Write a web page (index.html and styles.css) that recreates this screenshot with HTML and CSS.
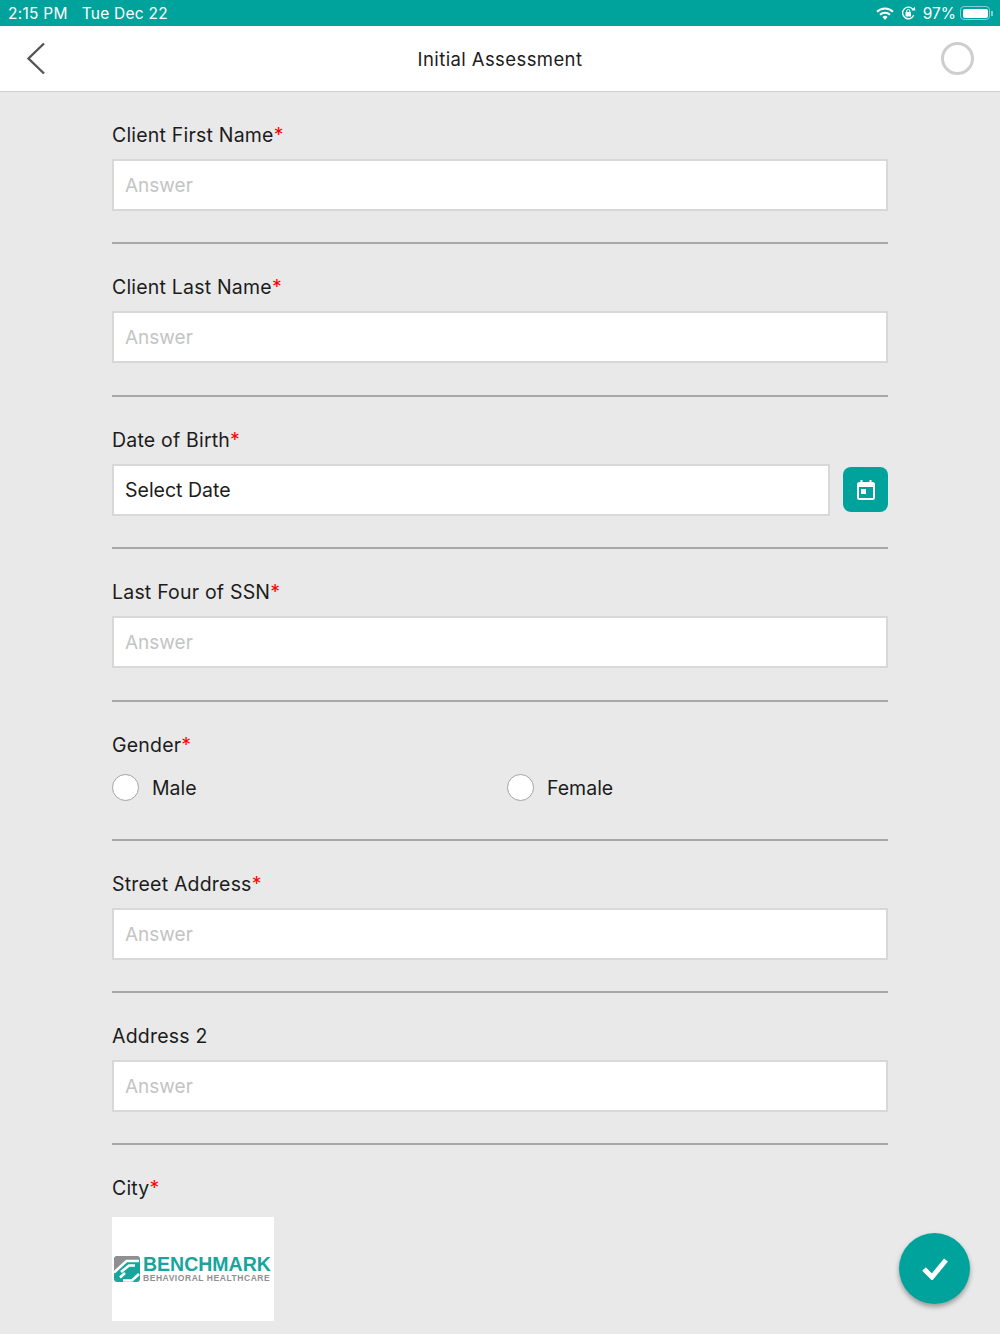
FILE: index.html
```html
<!DOCTYPE html>
<html>
<head>
  <title>Initial Assessment</title>
  <link rel="stylesheet" href="styles.css">
</head>
<body>
  <div class="status-bar">
    <div class="status-left">
      <span>2:15 PM</span>
      <span>Tue Dec 22</span>
    </div>
    <div class="status-right">
      <svg class="wifi" width="18" height="13" viewBox="0 0 18 13">
        <path d="M1 4.800 A11.500 11.500 0 0 1 17 4.800" fill="none" stroke="#fff" stroke-width="2"/>
        <path d="M4 7.800 A7.300 7.300 0 0 1 14 7.800" fill="none" stroke="#fff" stroke-width="2"/>
        <path d="M6.500 10 A3.500 3.500 0 0 1 11.500 10 L9 13 Z" fill="#fff"/>
      </svg>
      <svg class="lock" width="15" height="14" viewBox="0 0 15 14">
        <path d="M12.700 9.300 A5.800 5.800 0 1 1 12.300 3.800" fill="none" stroke="#fff" stroke-width="1.300"/>
        <path d="M10.600 4.400 L14.400 4.400 L13.600 0.800 Z" fill="#fff"/>
        <rect x="4.500" y="6" width="5.500" height="4.500" rx="0.600" fill="#fff"/>
        <path d="M5.700 6.500 V5 A1.500 1.500 0 0 1 8.800 5 V6.500" fill="none" stroke="#fff" stroke-width="1"/>
      </svg>
      <span class="battery-pct">97%</span>
      <div class="battery">
        <div class="battery-body"><div class="battery-fill"></div></div>
        <div class="battery-tip"></div>
      </div>
    </div>
  </div>

  <div class="header">
    <svg class="back" width="20" height="33" viewBox="0 0 20 33">
      <path d="M18 1.500 L2.500 16.500 L18 31.500" fill="none" stroke="#555" stroke-width="2.400"/>
    </svg>
    <div class="title">Initial Assessment</div>
    <div class="progress"></div>
  </div>

  <div class="form">
    <div class="field">
      <div class="label">Client First Name<span class="req">*</span></div>
      <div class="input placeholder">Answer</div>
    </div>
    <div class="field">
      <div class="label">Client Last Name<span class="req">*</span></div>
      <div class="input placeholder">Answer</div>
    </div>
    <div class="field">
      <div class="label">Date of Birth<span class="req">*</span></div>
      <div class="date-row">
        <div class="input">Select Date</div>
        <div class="date-btn">
          <svg width="18" height="20" viewBox="0 0 18 20">
            <path d="M4.500 0 V4 M13.500 0 V4" stroke="#fff" stroke-width="2"/>
            <rect x="1" y="3" width="16" height="16" rx="1.500" fill="none" stroke="#fff" stroke-width="2"/>
            <rect x="1" y="3" width="16" height="4" fill="#fff"/>
            <rect x="4" y="9" width="5" height="5" fill="#fff"/>
          </svg>
        </div>
      </div>
    </div>
    <div class="field">
      <div class="label">Last Four of SSN<span class="req">*</span></div>
      <div class="input placeholder">Answer</div>
    </div>
    <div class="field field-radio">
      <div class="label">Gender<span class="req">*</span></div>
      <div class="radio-row">
        <div class="radio-item"><span class="radio"></span>Male</div>
        <div class="radio-item"><span class="radio"></span>Female</div>
      </div>
    </div>
    <div class="field">
      <div class="label">Street Address<span class="req">*</span></div>
      <div class="input placeholder">Answer</div>
    </div>
    <div class="field">
      <div class="label">Address 2</div>
      <div class="input placeholder">Answer</div>
    </div>
    <div class="field field-last">
      <div class="label">City<span class="req">*</span></div>
      <div class="logo">
        <svg class="logo-icon" width="26" height="26" viewBox="0 0 26 26">
          <rect width="26" height="26" rx="3.500" fill="#17a59d"/>
          <path d="M3.500 0 H22.500 A3.500 3.500 0 0 1 26 3.500 V4 H13 L0 15 V3.500 A3.500 3.500 0 0 1 3.500 0 Z" fill="#8f8f91"/>
          <path d="M0 16.500 L12.500 5 H25 M7 16 L15 9.500 H21 M6 21.500 L11 17 M9 24.500 H18 L25 18" fill="none" stroke="#fff" stroke-width="2.600"/>
        </svg>
        <div class="logo-text">
          <div class="logo-name">BENCHMARK</div>
          <div class="logo-sub">BEHAVIORAL HEALTHCARE</div>
        </div>
      </div>
    </div>
  </div>

  <div class="fab">
    <svg width="26" height="23" viewBox="0 0 26 23">
      <path d="M2 12 L10 20 L24 3" fill="none" stroke="#fff" stroke-width="5"/>
    </svg>
  </div>
</body>
</html>
```

FILE: styles.css
```css
html, body {
  margin: 0;
  height: 100vh;
  overflow: hidden;
}

body {
  background-color: #e9e9e9;
  color: #1c1c1c;
  font-family: Inter, Roboto, sans-serif;
}

.status-bar {
  height: 26px;
  padding: 0 7px 0 8px;
  background-color: #00a39b;
  color: #fff;
  font-size: 15.500px;
  display: flex;
  justify-content: space-between;
  align-items: center;
}

.status-left {
  display: flex;
  gap: 14px;
  letter-spacing: 0.25px;
}

.status-right {
  display: flex;
  align-items: center;
}

.wifi {
  margin-right: 7px;
}

.lock {
  margin-right: 7px;
}

.battery-pct {
  margin-right: 4px;
}

.battery {
  display: flex;
  align-items: center;
}

.battery-body {
  box-sizing: border-box;
  width: 30px;
  height: 14px;
  padding: 1.500px;
  border: 1px solid #7fd1cd;
  border-radius: 4px;
}

.battery-fill {
  width: 100%;
  height: 100%;
  background-color: #fff;
  border-radius: 2px;
}

.battery-tip {
  width: 2px;
  height: 5px;
  margin-left: 1px;
  background-color: #7fd1cd;
}

.header {
  height: 65px;
  padding: 0 26px;
  background-color: #fff;
  border-bottom: 1px solid #cfcfcf;
  display: grid;
  grid-template-columns: 1fr auto 1fr;
  align-items: center;
}

.title {
  padding-top: 1px;
  font-size: 18.500px;
  letter-spacing: 0.4px;
}

.progress {
  box-sizing: border-box;
  width: 33px;
  height: 33px;
  justify-self: end;
  border: 3px solid #cecece;
  border-radius: 50%;
}

.form {
  width: 776px;
  margin: 0 auto;
}

.field {
  height: 152.400px;
  box-sizing: border-box;
  padding-top: 31px;
  border-bottom: 2px solid #a8a8a8;
}

.field-radio {
  height: 139px;
}

.field-last {
  border-bottom: none;
}

.label {
  height: 24px;
  margin-bottom: 12px;
  font-size: 19.500px;
  line-height: 24px;
  letter-spacing: 0.2px;
}

.req {
  color: #f00;
}

.input {
  box-sizing: border-box;
  height: 52px;
  padding: 0 11px;
  flex: 1;
  background-color: #fff;
  border: 2px solid #d8d8d8;
  font-size: 19.500px;
  line-height: 48px;
}

.placeholder {
  color: #c4c4c4;
  font-size: 19px;
  line-height: 50px;
}

.date-row {
  display: flex;
  align-items: center;
  gap: 13px;
}

.date-btn {
  width: 45px;
  height: 45px;
  background-color: #00a39b;
  border-radius: 8px;
  display: flex;
  justify-content: center;
  align-items: center;
}

.radio-row {
  display: grid;
  grid-template-columns: 395px 1fr;
  margin-top: 17px;
}

.radio-item {
  display: flex;
  align-items: center;
  gap: 13px;
  height: 28px;
  font-size: 19.500px;
}

.radio {
  box-sizing: border-box;
  width: 27px;
  height: 27px;
  background-color: #fff;
  border: 1.500px solid #a4a4a4;
  border-radius: 50%;
}

.logo {
  width: 162px;
  height: 104px;
  margin-top: 17px;
  background-color: #fff;
  display: flex;
  align-items: center;
  gap: 3px;
  padding-left: 2px;
  box-sizing: border-box;
}

.logo-icon {
  flex-shrink: 0;
}

.logo-text {
  font-family: "Liberation Sans", sans-serif;
  font-weight: bold;
}

.logo-name {
  color: #17a59d;
  font-size: 19.500px;
  line-height: 18px;
}

.logo-sub {
  color: #8f8f91;
  font-size: 8.500px;
  line-height: 10px;
  letter-spacing: 0.55px;
}

.fab {
  position: fixed;
  left: 899px;
  top: 1233px;
  width: 71px;
  height: 71px;
  background-color: #00a39b;
  border-radius: 50%;
  box-shadow: 0 3px 5px rgba(0, 0, 0, 0.35);
  display: flex;
  justify-content: center;
  align-items: center;
}
```
